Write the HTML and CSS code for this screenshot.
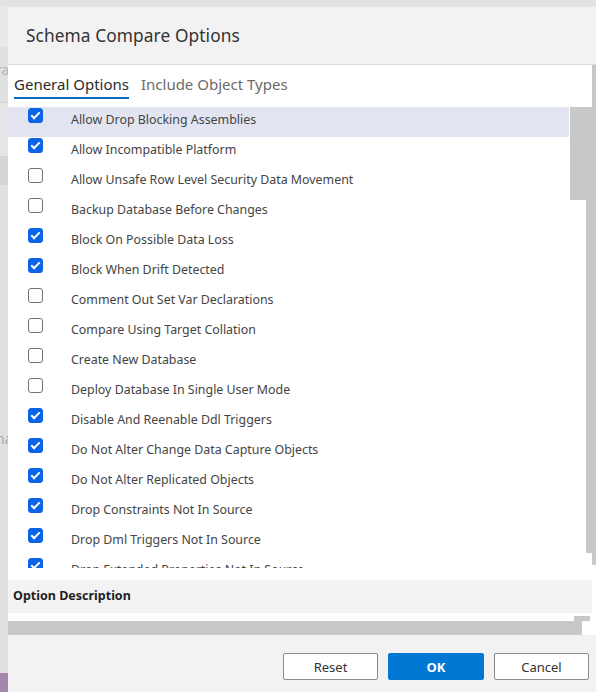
FILE: index.html
```html
<!DOCTYPE html>
<html>
<head>
<meta charset="utf-8">
<link rel="stylesheet" href="styles.css">
</head>
<body>
<div class="topstrip"></div>
<div class="main">
  <div class="leftstrip">
    <div class="ls-a"></div>
    <div class="ls-frag ls-ra">ra</div>
    <div class="ls-line"></div>
    <div class="ls-b"></div>
    <div class="ls-c"></div>
    <div class="ls-frag ls-na">na</div>
    <div class="ls-fill"></div>
    <div class="ls-purple"></div>
  </div>
  <div class="dialog">
    <div class="header"><span class="title">Schema Compare Options</span></div>
    <div class="body">
      <div class="tabs">
        <span class="tab active">General Options</span>
        <span class="tab">Include Object Types</span>
      </div>
      <div class="list">
        <div class="row selected"><span class="cb on"></span><span class="label">Allow Drop Blocking Assemblies</span></div>
        <div class="row"><span class="cb on"></span><span class="label">Allow Incompatible Platform</span></div>
        <div class="row"><span class="cb"></span><span class="label">Allow Unsafe Row Level Security Data Movement</span></div>
        <div class="row"><span class="cb"></span><span class="label">Backup Database Before Changes</span></div>
        <div class="row"><span class="cb on"></span><span class="label">Block On Possible Data Loss</span></div>
        <div class="row"><span class="cb on"></span><span class="label">Block When Drift Detected</span></div>
        <div class="row"><span class="cb"></span><span class="label">Comment Out Set Var Declarations</span></div>
        <div class="row"><span class="cb"></span><span class="label">Compare Using Target Collation</span></div>
        <div class="row"><span class="cb"></span><span class="label">Create New Database</span></div>
        <div class="row"><span class="cb"></span><span class="label">Deploy Database In Single User Mode</span></div>
        <div class="row"><span class="cb on"></span><span class="label">Disable And Reenable Ddl Triggers</span></div>
        <div class="row"><span class="cb on"></span><span class="label">Do Not Alter Change Data Capture Objects</span></div>
        <div class="row"><span class="cb on"></span><span class="label">Do Not Alter Replicated Objects</span></div>
        <div class="row"><span class="cb on"></span><span class="label">Drop Constraints Not In Source</span></div>
        <div class="row"><span class="cb on"></span><span class="label">Drop Dml Triggers Not In Source</span></div>
        <div class="row"><span class="cb on"></span><span class="label">Drop Extended Properties Not In Source</span></div>
      </div>
      <div class="gap1"></div>
      <div class="desc">Option Description</div>
      <div class="gap2"></div>
      <div class="hscroll"></div>
      <div class="sb sb-outer-top"></div>
      <div class="sb sb-thumb"></div>
      <div class="sb sb-track"></div>
      <div class="sb sb-tail"></div>
      <div class="sb sb-hstep"></div>
    </div>
    <div class="footer">
      <button class="btn">Reset</button>
      <button class="btn primary">OK</button>
      <button class="btn">Cancel</button>
    </div>
  </div>
</div>
</body>
</html>
```

FILE: styles.css
```css
html, body {
  margin: 0;
  padding: 0;
  background: #e3e3e3;
  font-family: "Noto Sans", "Open Sans", sans-serif;
}
body {
  width: 596px;
  height: 692px;
  overflow: hidden;
}
.topstrip {
  height: 7px;
  background: #e3e3e3;
}
.main {
  display: flex;
  height: 685px;
}
.leftstrip {
  width: 8px;
  display: flex;
  flex-direction: column;
  overflow: hidden;
  background: #e0e0e0;
}
.ls-a { height: 40px; background: #e9e9e9; }
.ls-frag {
  font-size: 14px;
  color: #b4b4b4;
  line-height: 16px;
  white-space: nowrap;
  margin-left: -4px;
}
.ls-ra { height: 30px; margin-top: 15px; }
.ls-line { height: 1px; background: #cfcfcf; margin-top: 10px; }
.ls-b { height: 53px; background: #e6e6e6; }
.ls-c { height: 29px; background: #d6d6d6; }
.ls-na { margin-top: 246px; height: 16px; color: #a9a9a9; }
.ls-fill { flex: 1; }
.ls-purple { height: 19px; background: #a686ad; }

.dialog {
  flex: 1;
  display: flex;
  flex-direction: column;
  background: #ffffff;
}
.header {
  height: 57px;
  background: #f2f2f2;
  border-bottom: 1px solid #dcdcdc;
  display: flex;
  align-items: center;
  padding-left: 18px;
  box-sizing: content-box;
}
.title {
  font-size: 17.3px;
  color: #333333;
  letter-spacing: 0.1px;
}
.body {
  position: relative;
  display: flex;
  flex-direction: column;
  height: 570px;
}
.tabs {
  height: 42px;
  display: flex;
  align-items: flex-start;
  padding-left: 6px;
  gap: 12px;
  box-sizing: border-box;
  padding-top: 8px;
}
.tab {
  font-size: 15px;
  line-height: 22px;
  color: #6b6b6b;
  padding-bottom: 2px;
  border-bottom: 2px solid transparent;
}
.tab.active {
  color: #2b2b2b;
  border-bottom-color: #0f6cbd;
}
.list {
  height: 461px;
  overflow: hidden;
  width: 561px;
}
.row {
  height: 30px;
  display: flex;
  align-items: flex-start;
  padding-left: 20px;
  box-sizing: border-box;
}
.row.selected { background: #e2e5f1; }
.cb {
  width: 13px;
  height: 13px;
  margin-top: 1px;
  border: 1px solid #727272;
  border-radius: 3px;
  background: #ffffff;
  flex: none;
  position: relative;
}
.cb.on {
  background: #0b63e6;
  border-color: #0b63e6;
}
.cb.on::after {
  content: "";
  position: absolute;
  left: 4px;
  top: 1px;
  width: 3px;
  height: 7px;
  border: solid #ffffff;
  border-width: 0 2px 2px 0;
  transform: rotate(45deg);
}
.label {
  margin-left: 28px;
  margin-top: 5px;
  font-size: 12.4px;
  line-height: 16px;
  color: #444444;
  white-space: nowrap;
}
.gap1 { height: 12px; }
.desc {
  height: 33px;
  width: 584px;
  background: #f3f3f3;
  font-size: 12.5px;
  font-weight: bold;
  color: #1f1f1f;
  padding-left: 5px;
  box-sizing: border-box;
  line-height: 31px;
}
.gap2 { height: 8px; }
.hscroll {
  height: 14px;
  width: 574px;
  background: #c8c8c6;
}
.sb {
  position: absolute;
  background: #c8c8c6;
}
.sb-outer-top { left: 584px; top: 0; width: 4px; height: 42px; }
.sb-thumb { left: 562px; top: 42px; width: 26px; height: 93px; }
.sb-track { left: 578px; top: 135px; width: 10px; height: 353px; }
.sb-tail { left: 584px; top: 488px; width: 4px; height: 12px; }
.sb-hstep { left: 566px; top: 551px; width: 16px; height: 5px; }

.footer {
  height: 57px;
  background: #f2f2f2;
  display: flex;
  justify-content: flex-end;
  align-items: flex-start;
  padding-top: 18px;
  padding-right: 7px;
  box-sizing: border-box;
  gap: 10px;
}
.btn {
  height: 27px;
  width: 95px;
  font-family: "Noto Sans", "Open Sans", sans-serif;
  font-size: 13px;
  color: #333333;
  background: #ffffff;
  border: 1px solid #8a8a8a;
  border-radius: 2px;
  padding: 0;
}
.btn.primary {
  width: 96px;
  background: #0078d4;
  border-color: #0078d4;
  color: #ffffff;
  font-weight: bold;
}
```
